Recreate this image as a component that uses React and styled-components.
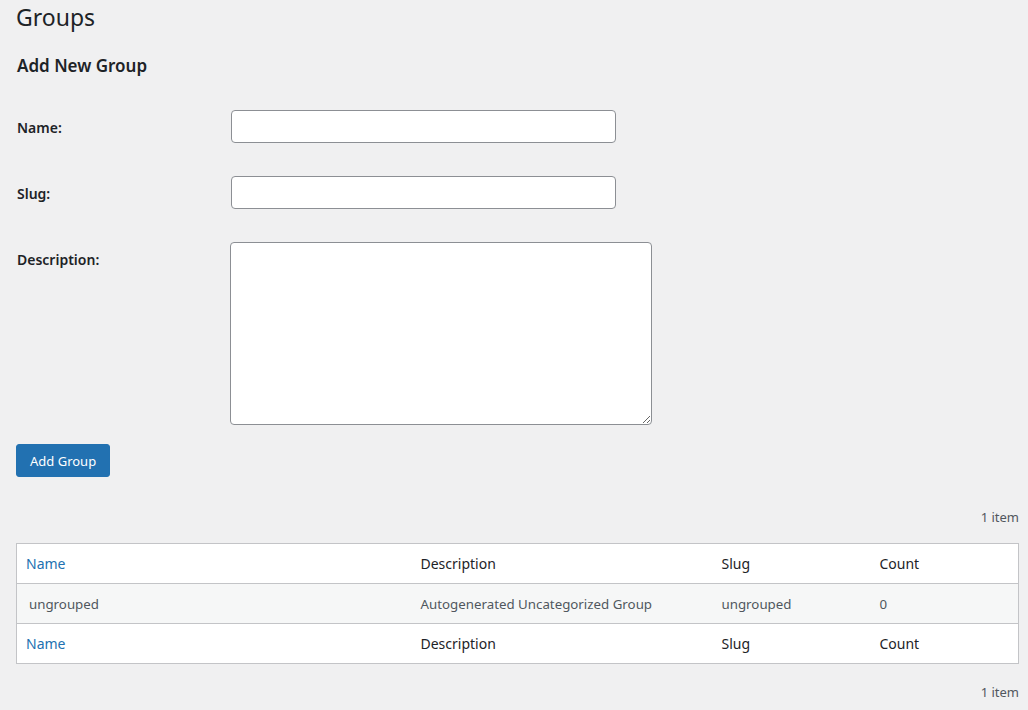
import React from "react";
import styled, { createGlobalStyle } from "styled-components";

const GlobalStyle = createGlobalStyle`
  html, body {
    margin: 0;
    padding: 0;
    background: #f0f0f1;
  }
  body {
    font-family: "Noto Sans", "Open Sans", sans-serif;
    color: #1d2327;
    font-size: 13px;
  }
`;

const Wrap = styled.div`
  padding: 0 9px 20px 16px;
`;

const Title = styled.h1`
  margin: 0;
  padding-top: 2px;
  font-size: 23px;
  font-weight: 400;
  line-height: 30px;
  color: #1d2327;
`;

const SubTitle = styled.h2`
  margin: 22px 0 0 1px;
  font-size: 17px;
  font-weight: 600;
  line-height: 24px;
`;

const Form = styled.form`
  margin-top: 32px;
  display: flex;
  flex-direction: column;
  gap: 33px;
`;

const FieldRow = styled.div`
  display: grid;
  grid-template-columns: 214px 1fr;
  align-items: start;
`;

const Label = styled.label`
  padding: 8px 0 0 1px;
  font-size: 14px;
  font-weight: 600;
  line-height: 20px;
`;

const TextInput = styled.input`
  box-sizing: border-box;
  width: 385px;
  height: 33px;
  margin: 0 0 0 1px;
  border: 1px solid #8c8f94;
  border-radius: 4px;
  background: #fff;
  font: inherit;
`;

const TextArea = styled.textarea`
  box-sizing: border-box;
  width: 422px;
  height: 183px;
  margin: 0;
  border: 1px solid #8c8f94;
  border-radius: 4px;
  background: #fff;
  font: inherit;
`;

const Button = styled.button`
  align-self: flex-start;
  margin-top: -14px;
  height: 33px;
  padding: 0 13px;
  border: 1px solid #2271b1;
  border-radius: 3px;
  background: #2271b1;
  color: #fff;
  font-family: inherit;
  font-size: 13px;
  cursor: pointer;
`;

const Count = styled.div`
  text-align: right;
  margin-top: ${(p) => p.$top}px;
  font-size: 13px;
  line-height: 20px;
  color: #50575e;
`;

const Table = styled.table`
  width: 100%;
  margin-top: 16px;
  border-collapse: collapse;
  table-layout: fixed;
  border: 1px solid #c3c4c7;
  background: #fff;
`;

const Cell = styled.td`
  height: 39px;
  padding: 0 9px;
  padding-left: ${(p) => (p.$first ? (p.$head ? 9 : 12) : 11)}px;
  font-size: ${(p) => (p.$head ? 14 : 13.3)}px;
  color: ${(p) => (p.$link ? "#2271b1" : p.$head ? "#1d2327" : "#50575e")};
  text-align: left;
  font-weight: 400;
  vertical-align: middle;
`;

const Row = styled.tr`
  background: ${(p) => (p.$alt ? "#f6f7f7" : "#fff")};
  border-bottom: 1px solid #c3c4c7;
`;

const HeadRow = () => (
  <Row>
    <Cell as="th" $head $first $link>Name</Cell>
    <Cell as="th" $head>Description</Cell>
    <Cell as="th" $head>Slug</Cell>
    <Cell as="th" $head>Count</Cell>
  </Row>
);

const App = () => {
  return (
    <Wrap>
      <GlobalStyle />
      <Title>Groups</Title>
      <SubTitle>Add New Group</SubTitle>
      <Form onSubmit={(e) => e.preventDefault()}>
        <FieldRow>
          <Label>Name:</Label>
          <TextInput type="text" />
        </FieldRow>
        <FieldRow>
          <Label>Slug:</Label>
          <TextInput type="text" />
        </FieldRow>
        <FieldRow>
          <Label>Description:</Label>
          <TextArea />
        </FieldRow>
        <Button type="submit">Add Group</Button>
      </Form>
      <Count $top={30}>1 item</Count>
      <Table>
        <colgroup>
          <col style={{ width: 393 }} />
          <col style={{ width: 301 }} />
          <col style={{ width: 158 }} />
          <col />
        </colgroup>
        <thead>
          <HeadRow />
        </thead>
        <tbody>
          <Row $alt>
            <Cell $first>ungrouped</Cell>
            <Cell>Autogenerated Uncategorized Group</Cell>
            <Cell>ungrouped</Cell>
            <Cell>0</Cell>
          </Row>
        </tbody>
        <tfoot>
          <HeadRow />
        </tfoot>
      </Table>
      <Count $top={18}>1 item</Count>
    </Wrap>
  );
};

export default App;
